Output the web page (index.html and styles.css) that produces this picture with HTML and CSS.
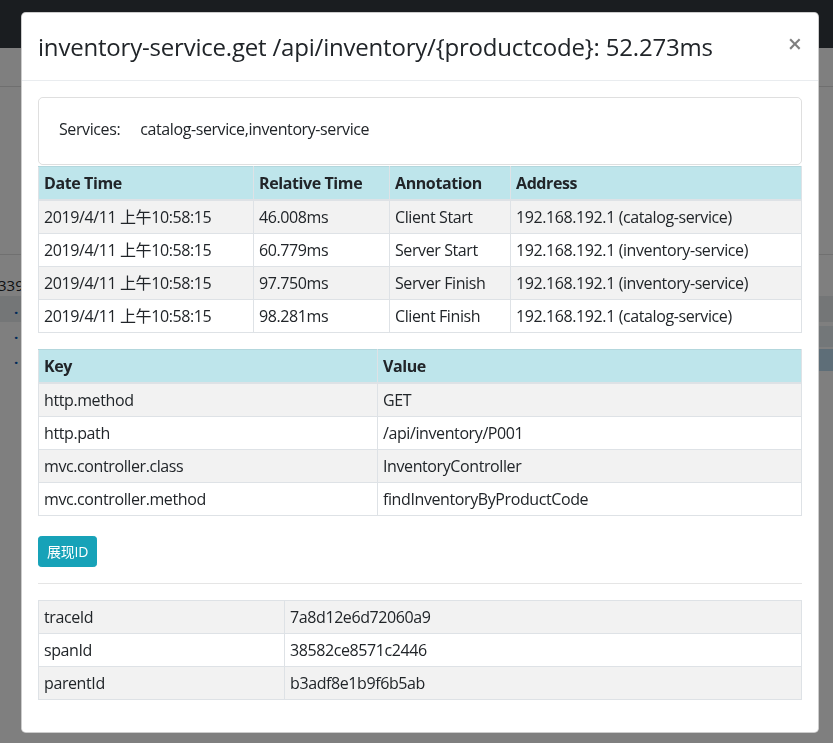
FILE: index.html
```html
<!DOCTYPE html>
<html lang="zh">
<head>
<meta charset="utf-8">
<title>Trace detail</title>
<link rel="stylesheet" href="styles.css">
</head>
<body>
<div class="page">
  <div class="navbar"></div>
  <div class="subnav"></div>
  <div class="content">
    <div class="list-head"></div>
    <div class="list-row total"><span>339ms</span></div>
    <div class="list-row dark"><span class="dot">·</span></div>
    <div class="list-row"><span class="dot">·</span><span class="bar grey"></span></div>
    <div class="list-row"><span class="dot">·</span><span class="bar blue"></span></div>
  </div>
</div>
<div class="backdrop"></div>
<div class="modal">
  <div class="modal-header">
    <h4 class="modal-title">inventory-service.get /api/inventory/{productcode}: 52.273ms</h4>
    <button class="close" type="button">×</button>
  </div>
  <div class="modal-body">
    <div class="card">
      <div class="card-body"><span class="label">Services:</span><span>catalog-service,inventory-service</span></div>
    </div>
    <table class="table ann">
      <thead>
        <tr><th class="c1">Date Time</th><th class="c2">Relative Time</th><th class="c3">Annotation</th><th>Address</th></tr>
      </thead>
      <tbody>
        <tr><td>2019/4/11 上午10:58:15</td><td>46.008ms</td><td>Client Start</td><td>192.168.192.1 (catalog-service)</td></tr>
        <tr><td>2019/4/11 上午10:58:15</td><td>60.779ms</td><td>Server Start</td><td>192.168.192.1 (inventory-service)</td></tr>
        <tr><td>2019/4/11 上午10:58:15</td><td>97.750ms</td><td>Server Finish</td><td>192.168.192.1 (inventory-service)</td></tr>
        <tr><td>2019/4/11 上午10:58:15</td><td>98.281ms</td><td>Client Finish</td><td>192.168.192.1 (catalog-service)</td></tr>
      </tbody>
    </table>
    <table class="table kv">
      <thead>
        <tr><th class="k">Key</th><th>Value</th></tr>
      </thead>
      <tbody>
        <tr><td>http.method</td><td>GET</td></tr>
        <tr><td>http.path</td><td>/api/inventory/P001</td></tr>
        <tr><td>mvc.controller.class</td><td>InventoryController</td></tr>
        <tr><td>mvc.controller.method</td><td>findInventoryByProductCode</td></tr>
      </tbody>
    </table>
    <div class="actions"><button class="btn" type="button">展现ID</button></div>
    <hr class="divider">
    <table class="table ids">
      <tbody>
        <tr><td class="k">traceId</td><td>7a8d12e6d72060a9</td></tr>
        <tr><td class="k">spanId</td><td>38582ce8571c2446</td></tr>
        <tr><td class="k">parentId</td><td>b3adf8e1b9f6b5ab</td></tr>
      </tbody>
    </table>
  </div>
</div>
</body>
</html>
```
FILE: styles.css
```css
* { box-sizing: border-box; }
html, body { margin: 0; padding: 0; }
body {
  font-family: "Open Sans", "Noto Sans CJK SC", sans-serif;
  font-size: 16px;
  line-height: 1.5;
  color: #212529;
  background: #fff;
  height: 743px;
  overflow: hidden;
}
.page { height: 743px; }
.navbar { height: 48px; background: #343a40; }
.subnav { height: 39px; border-bottom: 1px solid #dedede; }
.content { padding-top: 167px; }
.list-head { height: 1px; background: #e0e0e0; }
.list-row {
  height: 25px;
  display: flex;
  align-items: center;
  font-size: 15px;
  padding-left: 14px;
}
.list-row.total { height: 41px; padding-left: 0; padding-top: 20px; margin-left: -2px; }
.list-row.dark { background: #e9ecef; height: 26px; }
.dot { color: #0056b3; font-weight: 700; padding-top: 6px; }
.bar { margin-left: auto; width: 40px; height: 21px; }
.bar.grey { background: #e6eef3; margin-top: 3px; }
.bar.blue { background: #bcdcf0; height: 22px; }
.backdrop { position: fixed; inset: 0; background: rgba(0,0,0,.5); }

.modal {
  position: fixed;
  left: 21px;
  top: 12px;
  width: 798px;
  background: #fff;
  border: 1px solid rgba(0,0,0,.2);
  border-radius: 4.8px;
}
.modal-header {
  display: flex;
  align-items: flex-start;
  padding: 16px 16px 15px;
  border-bottom: 1px solid #e9ecef;
}
.modal-title {
  margin: 0;
  font-size: 24px;
  font-weight: 500;
  line-height: 1.5;
  letter-spacing: -0.2px;
}
.close {
  margin: -14px -16px -16px auto;
  padding: 16px;
  background: none;
  border: 0;
  font-family: inherit;
  font-size: 25px;
  font-weight: 600;
  line-height: 1;
  color: #000;
  opacity: .5;
  cursor: pointer;
}
.modal-body { padding: 16px; letter-spacing: -0.4px; }
.card {
  border: 1px solid rgba(0,0,0,.125);
  border-radius: 4.8px;
}
.card-body { padding: 19px 20px 23px; }
.label { margin-right: 20px; }
.table {
  width: 100%;
  border-collapse: collapse;
  margin-bottom: 16px;
}
.table.ann { margin-top: 1px; }
.table th, .table td {
  text-align: left;
  padding: 4px 5px;
  border: 1px solid #dee2e6;
  vertical-align: top;
  font-weight: 400;
  white-space: nowrap;
}
.table thead th {
  background: #bee5eb;
  font-weight: 700;
  border-bottom: 2px solid #dee2e6;
  border-color: #b3d7dd #dee2e6 #dee2e6;
}
.table tbody tr:nth-child(odd) td { background: #f2f2f2; }
.ann .c1 { width: 215px; }
.ann .c2 { width: 136px; }
.ann .c3 { width: 121px; }
.kv .k { width: 339px; }
.ids .k { width: 246px; }
.actions { margin-top: 20px; }
.btn {
  font-family: inherit;
  font-size: 14px;
  line-height: 1.5;
  padding: 4px 8px;
  color: #fff;
  background: #17a2b8;
  border: 1px solid #17a2b8;
  border-radius: 3.2px;
  letter-spacing: -0.2px;
}
.divider {
  margin: 16px 0;
  border: 0;
  border-top: 1px solid rgba(0,0,0,.1);
}
```
